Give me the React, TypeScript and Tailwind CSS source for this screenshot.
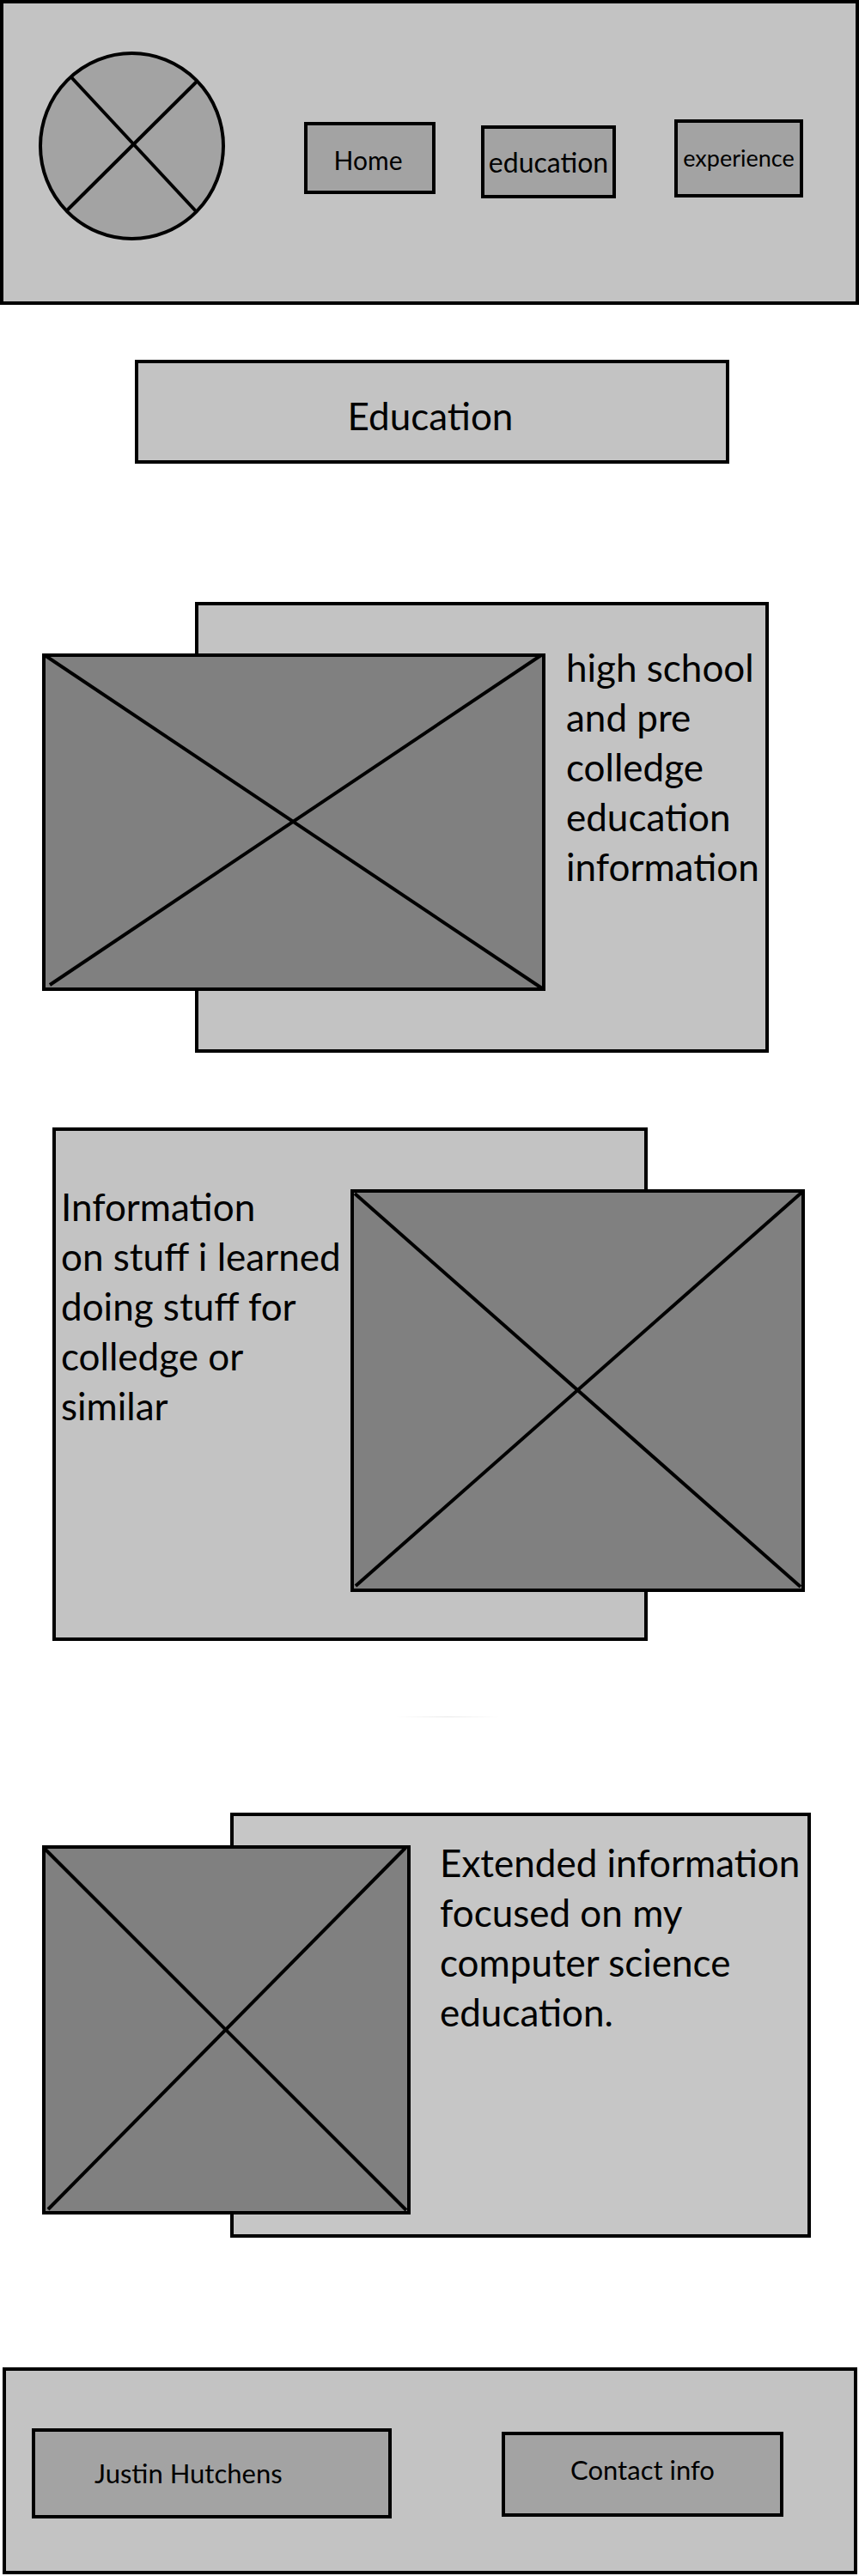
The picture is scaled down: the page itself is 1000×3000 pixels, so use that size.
type Line = [number, number, number, number];

function Placeholder({ width, height, lines, label, className }: {
  width: number;
  height: number;
  lines: Line[];
  label: string;
  className: string;
}) {
  return (
    <svg
      role="img"
      aria-label={label}
      viewBox={`0 0 ${width} ${height}`}
      className={`h-auto w-full overflow-visible border-4 border-black bg-[#808080] ${className}`}
    >
      {lines.map(([x1, y1, x2, y2]) => (
        <line key={`${x1}-${y1}`} x1={x1} y1={y1} x2={x2} y2={y2} stroke="black" strokeWidth="4" />
      ))}
    </svg>
  );
}

function Copy({ lines, className }: { lines: string[]; className: string }) {
  return (
    <p className={`text-[44px] leading-[58px] whitespace-nowrap ${className}`}>
      {lines.map((line) => (
        <span key={line} className="block">
          {line}
        </span>
      ))}
    </p>
  );
}

function Logo() {
  return (
    <svg role="img" aria-label="Logo" viewBox="0 0 217 220" className="w-[217px] shrink-0">
      <ellipse cx="108.5" cy="110" rx="106.5" ry="108" fill="#a3a3a3" stroke="black" strokeWidth="4" />
      <line x1="38" y1="30" x2="184" y2="187" stroke="black" strokeWidth="4" />
      <line x1="185" y1="34" x2="32" y2="186" stroke="black" strokeWidth="4" />
    </svg>
  );
}

export default function App() {
  return (
    <div className="min-h-screen bg-white font-['Lato','Open_Sans',sans-serif] text-black">
      <header className="flex min-h-[355px] items-start border-4 border-black bg-[#c3c3c3] pt-14 pr-[61px] pl-[41px]">
        <Logo />
        <nav className="ml-[92px] grid flex-1 grid-cols-[153fr_53fr_157fr_68fr_150fr] items-start pt-[79px]">
          <a
            href="#home"
            className="col-start-1 mt-[3px] flex h-[84px] items-center justify-center border-4 border-black bg-[#a3a3a3] pt-1 pr-1 text-[30px]"
          >
            Home
          </a>
          <a
            href="#education"
            className="col-start-3 mt-[7px] flex h-[85px] items-center justify-center border-4 border-black bg-[#a3a3a3] text-[32px]"
          >
            education
          </a>
          <a
            href="#experience"
            className="col-start-5 flex h-[91px] items-center justify-center border-4 border-black bg-[#a3a3a3] text-[27px]"
          >
            experience
          </a>
        </nav>
      </header>

      <main>
        <h1
          id="education"
          className="mt-16 mr-[151px] ml-[157px] flex h-[121px] items-center justify-center border-4 border-black bg-[#c3c3c3] pt-2 pr-1 text-[44px]"
        >
          Education
        </h1>

        <section className="mt-[161px] mr-[105px] ml-[49px] grid grid-cols-[178fr_408fr_260fr] grid-rows-[60px_auto_72px]">
          <div className="col-span-2 col-start-2 row-span-3 row-start-1 border-4 border-black bg-[#c3c3c3]" />
          <Placeholder
            label="High school"
            width={578}
            height={385}
            lines={[[-1, -2, 578, 386], [5, 382, 577, -2]]}
            className="col-span-2 col-start-1 row-start-2"
          />
          <Copy
            lines={["high school", "and pre", "colledge", "education", "information"]}
            className="col-start-3 row-span-3 row-start-1 w-0 pt-[47px] pl-6"
          />
        </section>

        <section className="mt-[87px] mr-[63px] ml-[61px] grid grid-cols-[347fr_346fr_183fr] grid-rows-[72px_auto_57px]">
          <div className="col-span-2 col-start-1 row-span-3 row-start-1 border-4 border-black bg-[#c3c3c3]" />
          <Placeholder
            label="College"
            width={521}
            height={461}
            lines={[[1, 1, 520, 459], [2, 458, 521, 0]]}
            className="col-span-2 col-start-2 row-start-2"
          />
          <Copy
            lines={["Information", "on stuff i learned", "doing stuff for", "colledge or", "similar"]}
            className="col-start-1 row-span-3 row-start-1 w-0 pt-[63px] pl-2.5"
          />
        </section>

        <div className="mt-[88px] ml-[461px] h-px w-[120px] bg-linear-to-r from-transparent via-[#e8e8e8] to-transparent" />

        <section className="mt-[111px] mr-14 ml-[49px] grid grid-cols-[219fr_210fr_466fr] grid-rows-[38px_auto_27px]">
          <div className="col-span-2 col-start-2 row-span-3 row-start-1 border-4 border-black bg-[#c6c6c6]" />
          <Placeholder
            label="Computer science"
            width={421}
            height={422}
            lines={[[-2, -1, 420, 421], [3, 420, 419, -1]]}
            className="col-span-2 col-start-1 row-start-2"
          />
          <Copy
            lines={["Extended information", "focused on my", "computer science", "education."]}
            className="col-start-3 row-span-3 row-start-1 w-0 pt-[29px] pl-[34px]"
          />
        </section>
      </main>

      <footer className="mt-[151px] mr-0.5 ml-[3px] grid min-h-[241px] grid-cols-[419fr_128fr_328fr] items-start border-4 border-black bg-[#c3c3c3] pt-[67px] pr-[82px] pl-[30px]">
        <p className="col-start-1 flex h-[105px] items-center border-4 border-black bg-[#a3a3a3] pl-[69px] text-[31px]">
          Justin Hutchens
        </p>
        <a
          href="#contact"
          className="col-start-3 mt-1 flex h-[99px] items-center justify-center border-4 border-black bg-[#a3a3a3] pb-2.5 text-[31px]"
        >
          Contact info
        </a>
      </footer>
    </div>
  );
}
